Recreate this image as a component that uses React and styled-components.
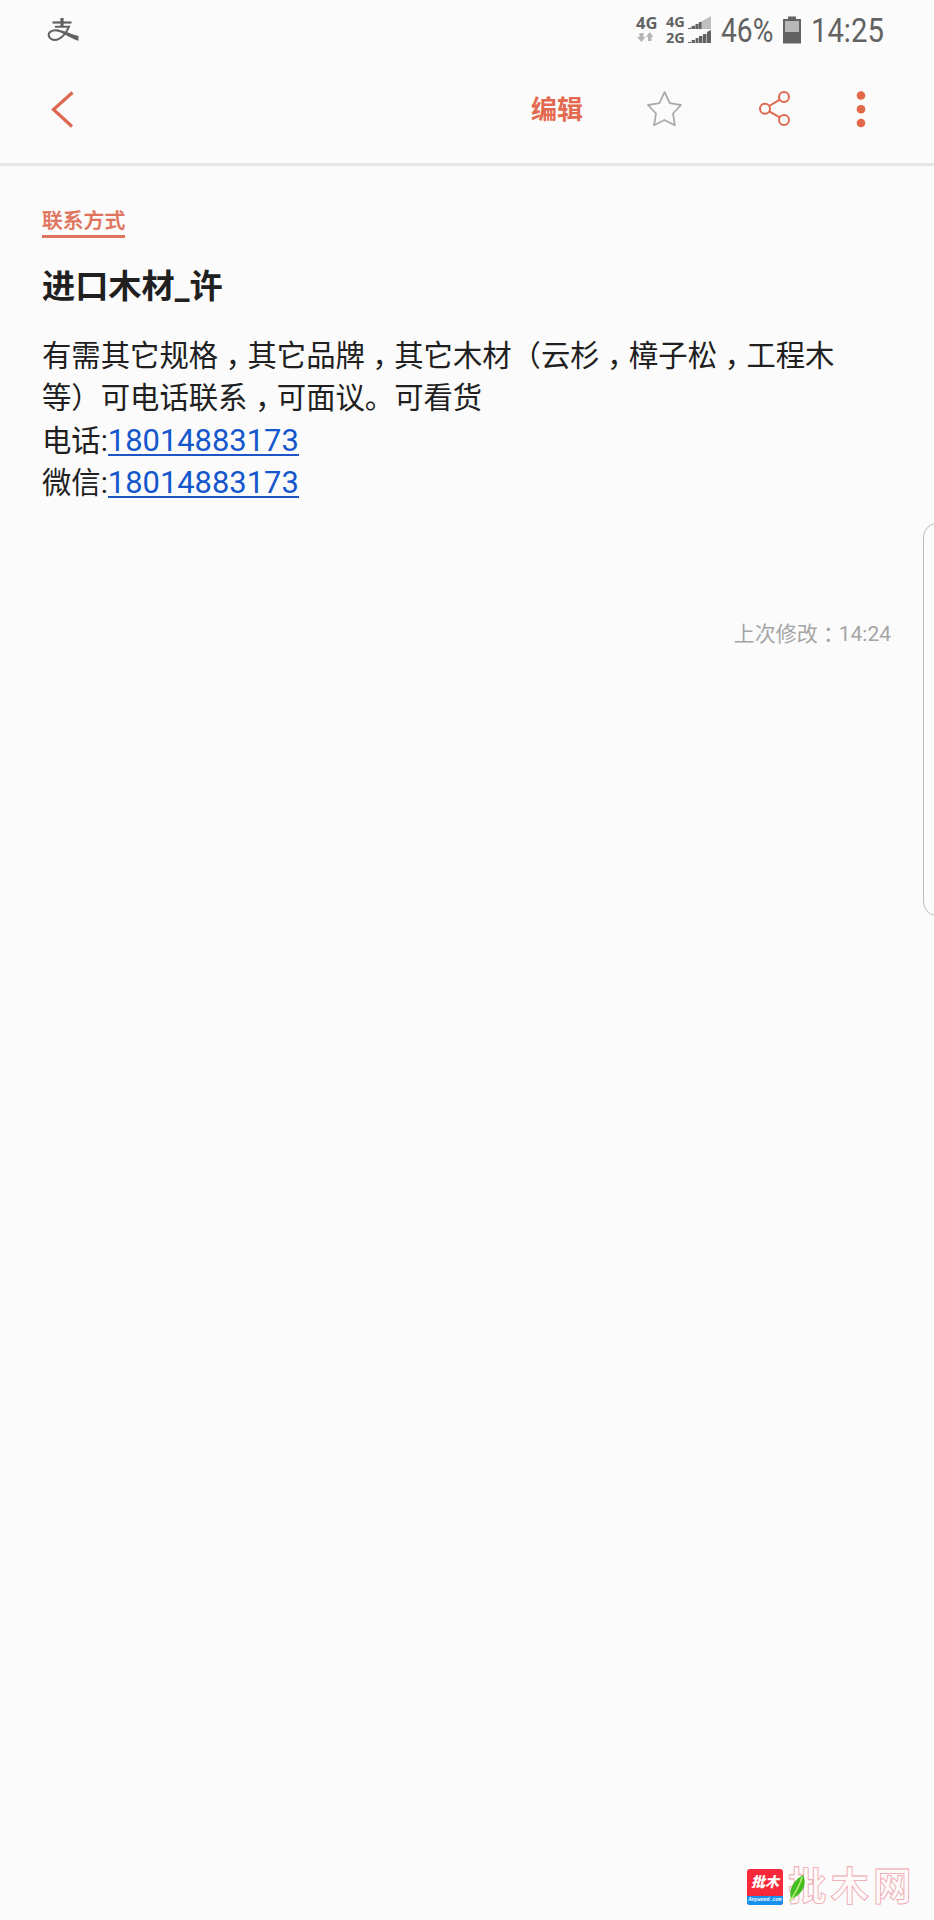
import React from "react";
import styled, { createGlobalStyle } from "styled-components";

const GlobalStyle = createGlobalStyle`
  * {
    box-sizing: border-box;
  }

  body {
    margin: 0;
    background-color: #fbfbfb;
    font-family: Roboto, "Noto Sans CJK SC", sans-serif;
    color: #202020;
  }
`;

const Screen = styled.div`
  position: relative;
  display: flex;
  flex-direction: column;
  width: 934px;
  height: 1920px;
  overflow: hidden;
`;

const StatusBar = styled.div`
  display: flex;
  justify-content: space-between;
  height: 60px;
  padding: 0 48px 0 47px;
  color: #626262;
`;

const StatusGroup = styled.div`
  display: flex;
  align-items: center;
  height: 59px;
`;

const Network = styled.div`
  display: flex;
  flex-direction: column;
  width: ${(props) => props.$width}px;
  margin-right: ${(props) => props.$gap || 0}px;
  font-family: "Open Sans", sans-serif;
  font-size: ${(props) => props.$size}px;
  font-weight: bold;
  line-height: 16px;
`;

const StatusText = styled.span`
  width: ${(props) => props.$width}px;
  margin-left: 10px;
  font-size: 34px;
  line-height: 60px;
  white-space: nowrap;
  transform: scaleX(${(props) => props.$scale});
  transform-origin: left center;
`;

const Toolbar = styled.header`
  display: flex;
  align-items: center;
  height: 106px;
  padding: 0 68px 5px 50px;
  border-bottom: 3px solid #e5e5e5;
`;

const IconBtn = styled.button`
  display: flex;
  padding: 0;
  margin-left: ${(props) => props.$left || 0}px;
  border: none;
  background: transparent;
`;

const EditBtn = styled.button`
  width: 54px;
  margin-left: auto;
  padding: 0 0 2px;
  border: none;
  background: transparent;
  color: #e36a50;
  font-family: "Noto Sans CJK SC", sans-serif;
  font-size: 26px;
  font-weight: bold;
  line-height: 38px;
`;

const Note = styled.main`
  display: flex;
  flex-direction: column;
  align-items: flex-start;
  padding: 40px 43px 0 42px;
`;

const Category = styled.span`
  height: 32px;
  border-bottom: 3px solid #dc745f;
  color: #e0735c;
  font-size: 20.8px;
  font-weight: 500;
  line-height: 30px;
  -webkit-text-stroke: 0.3px #e0735c;
`;

const Title = styled.h1`
  margin: 25px 0 0;
  font-size: 33.2px;
  font-weight: bold;
  line-height: 48px;
`;

const Body = styled.div`
  margin-top: 24px;
  font-size: 29.35px;
  line-height: 42.3px;
`;

const Line = styled.p`
  height: 42.3px;
  margin: 0;
  white-space: nowrap;
`;

const Mark = styled.span`
  font-family: "Noto Sans CJK TC", sans-serif;
  line-height: 0;
  vertical-align: ${(props) => props.$drop}em;
`;

const PhoneLink = styled.a`
  display: inline-block;
  height: 32px;
  border-bottom: 2px solid #1b56c4;
  color: #1456cc;
  font-size: 30.9px;
  line-height: 33px;
`;

const Modified = styled.div`
  align-self: flex-end;
  margin-top: 115px;
  color: #a5a5a5;
  font-size: 21px;
  line-height: 30px;
`;

// handle of the edge panel, overlays the note
const EdgeHandle = styled.div`
  position: absolute;
  top: 523px;
  left: 923px;
  width: 30px;
  height: 393px;
  border: 1px solid #bcbcbc;
  border-radius: 14px;
`;

const Watermark = styled.footer`
  display: flex;
  align-items: center;
  margin: auto 21px 9px auto;
`;

const Badge = styled.div`
  display: flex;
  flex-direction: column;
  width: 36px;
  height: 36px;
  border-radius: 3px;
  overflow: hidden;
  background-color: #f8283b;
  color: #fff;
`;

const BadgeName = styled.span`
  height: 27px;
  font-size: 14px;
  font-weight: 900;
  font-style: italic;
  line-height: 27px;
  text-align: center;
`;

const BadgeSite = styled.span`
  height: 9px;
  background-color: #1790ee;
  font-family: "Liberation Mono", monospace;
  font-size: 5px;
  font-weight: bold;
  font-style: italic;
  line-height: 9px;
  text-align: center;
`;

const Leaf = styled.svg`
  width: 18px;
  height: 28px;
  margin: 2px -18px 0 5px;
  z-index: 1;
`;

const Brand = styled.span`
  width: 125px;
  padding-bottom: 7px;
  color: #fffafa;
  font-family: "Noto Sans CJK SC", sans-serif;
  font-size: 38.5px;
  font-weight: bold;
  letter-spacing: 4px;
  line-height: 42px;
  white-space: nowrap;
  -webkit-text-stroke: 0.8px #eda5ac;
`;

const AlipayIcon = () => (
  <svg width="33" height="26" viewBox="47 15.5 33 26" fill="none" stroke="#626262">
    <path d="M62 16.500V25" strokeWidth="3.200" />
    <path d="M52.500 21H71.500" strokeWidth="2.200" />
    <path d="M55 25.200H69C67 30 63 35.500 58.500 37.700C53 40 48.500 36.500 48.700 33C49 29.500 54 28 58.500 29.200" strokeWidth="2" />
    <path d="M57 27.800C65 29.300 71 33 78.500 34.500V39.300C71 37.500 65 32 57 29.800Z" fill="#626262" stroke="none" />
  </svg>
);

const Arrows = () => (
  <svg width="18" height="14" viewBox="0 0 18 14" fill="#b5b5b5">
    <path d="M3.500 2H7.500V6H9.500L5.500 11L1 6H3.500Z" />
    <path d="M12 10H15.500V6H17.500L13.700 1L10 6H12Z" />
  </svg>
);

const Signal = () => (
  <svg width="23" height="28" viewBox="0 0 23 28">
    <path d="M0 13L23 0V13Z" fill="#c0c0c0" />
    <path d="M0 13V12H3V13ZM3.600 13V10H7V13ZM7.600 13V8H10.500V13ZM11 13V6H13.500V13Z" fill="#626262" />
    <path d="M0 27V26H3V27ZM3.600 27V24H7V27ZM7.600 27V22H10.500V27ZM11 27V20H14.500V27ZM15 27V18H18.500V27ZM19 27V16L23 14V27Z" fill="#626262" />
  </svg>
);

const Battery = () => (
  <svg width="18" height="28" viewBox="0 0 18 28">
    <path d="M5 0.500H13V3H18V27.500H0V3H5Z" fill="#626262" />
    <path d="M2 5H16V16H2Z" fill="#b8b8b8" />
  </svg>
);

const BackIcon = () => (
  <svg width="24" height="38" viewBox="50 90 24 38" fill="none" stroke="#dc6852" strokeWidth="3.200">
    <path d="M72.500 92.500L53.500 109.500L72 126.500" />
  </svg>
);

const StarIcon = () => (
  <svg width="38" height="38" viewBox="645 90 38 38" fill="none" stroke="#aaaaaa" strokeWidth="1.800" strokeLinejoin="round">
    <path d="M664.500 92L669.800 103.200L681 105L673 113.500L674.800 125.300L664.500 120L654 125.300L656 113.500L648 105L659.500 103.200Z" />
  </svg>
);

const ShareIcon = () => (
  <svg width="34" height="38" viewBox="758 90 34 38" fill="none" stroke="#e0684f" strokeWidth="2">
    <circle cx="765" cy="108.700" r="5" />
    <circle cx="784" cy="97" r="5" />
    <circle cx="784" cy="120" r="5" />
    <path d="M769.300 106L779.700 99.700M769.300 111.300L779.700 117.400" />
  </svg>
);

const MoreIcon = () => (
  <svg width="10" height="38" viewBox="856 90 10 38" fill="#e36749">
    <circle cx="861" cy="95.500" r="4.300" />
    <circle cx="861" cy="109.300" r="4.300" />
    <circle cx="861" cy="123" r="4.300" />
  </svg>
);

// wide comma sits near the middle of its cell
const withCommas = (text) =>
  text.split(/(，)/).map((part, i) =>
    part === "，" ? <Mark key={i} $drop={-0.3}>{part}</Mark> : part
  );

const App = () => {
  const lines = [
    "有需其它规格，其它品牌，其它木材（云杉，樟子松，工程木",
    "等）可电话联系，可面议。可看货",
  ];

  const contacts = [
    { id: 0, label: "电话:", number: "18014883173" },
    { id: 1, label: "微信:", number: "18014883173" },
  ];

  return (
    <>
      <GlobalStyle />
      <Screen>
        <StatusBar>
          <StatusGroup>
            <AlipayIcon />
          </StatusGroup>
          <StatusGroup>
            <Network $width={22} $gap={8} $size={16.5}>
              <span>4G</span>
              <Arrows />
            </Network>
            <Network $width={20} $gap={2} $size={14.5}>
              <span>4G</span>
              <span>2G</span>
            </Network>
            <Signal />
            <StatusText $width={62} $scale={0.83}>46%</StatusText>
            <Battery />
            <StatusText $width={75} $scale={0.86}>14:25</StatusText>
          </StatusGroup>
        </StatusBar>
        <Toolbar>
          <IconBtn>
            <BackIcon />
          </IconBtn>
          <EditBtn>编辑</EditBtn>
          <IconBtn $left={61}>
            <StarIcon />
          </IconBtn>
          <IconBtn $left={75}>
            <ShareIcon />
          </IconBtn>
          <IconBtn $left={64}>
            <MoreIcon />
          </IconBtn>
        </Toolbar>
        <Note>
          <Category>联系方式</Category>
          <Title>进口木材_许</Title>
          <Body>
            {lines.map((line) => (
              <Line key={line}>{withCommas(line)}</Line>
            ))}
            {contacts.map((contact) => (
              <Line key={contact.id}>
                {contact.label}
                <PhoneLink>{contact.number}</PhoneLink>
              </Line>
            ))}
          </Body>
          <Modified>
            上次修改<Mark $drop={-0.04}>：</Mark>14:24
          </Modified>
        </Note>
        <EdgeHandle />
        <Watermark>
          <Badge>
            <BadgeName>批木</BadgeName>
            <BadgeSite>Anywood.com</BadgeSite>
          </Badge>
          <Leaf viewBox="0 0 18 28">
            <path d="M15 1C19 9 16 20 3 25C0 15 6 6 15 1Z" fill="#45bd20" />
            <path d="M14 3C12 11 8 18 2 27" fill="none" stroke="#b4ee76" strokeWidth="1.500" />
          </Leaf>
          <Brand>批木网</Brand>
        </Watermark>
      </Screen>
    </>
  );
};

export default App;
